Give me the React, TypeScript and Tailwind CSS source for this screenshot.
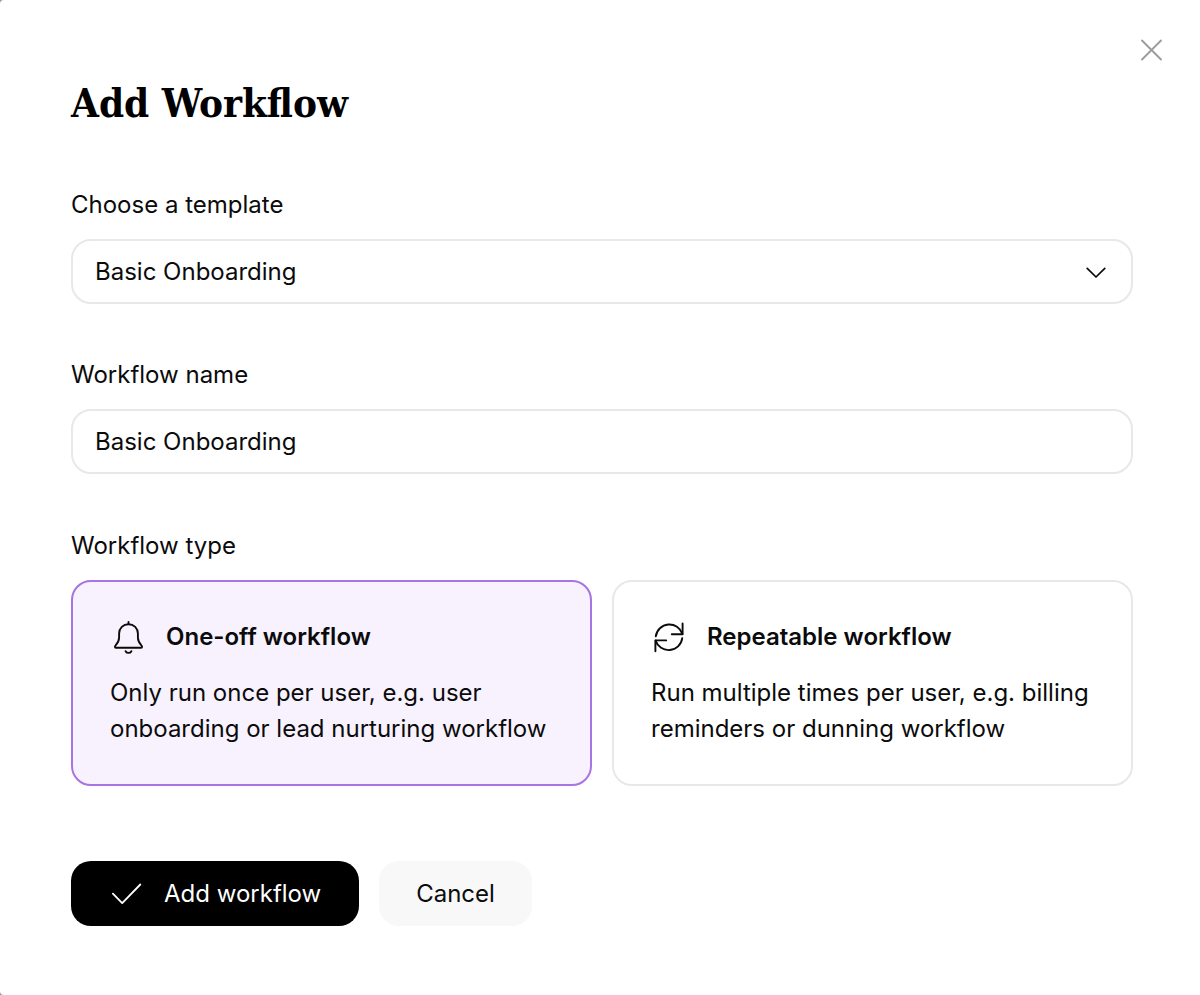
import { useState } from "react";
import type { ReactNode } from "react";

function CloseIcon() {
  return (
    <svg viewBox="0 0 24 24" className="size-6" fill="none" stroke="currentColor" strokeWidth="1.9" strokeLinecap="round" aria-hidden="true">
      <path d="M3 2.500l19 19M22 2.500l-19 19" />
    </svg>
  );
}

function ChevronIcon() {
  return (
    <svg viewBox="0 0 20 12" className="pointer-events-none absolute right-[27px] h-3 w-5" fill="none" stroke="currentColor" strokeWidth="1.7" strokeLinecap="round" strokeLinejoin="round" aria-hidden="true">
      <path d="M1.200 2.300L10 11l8.800-8.700" />
    </svg>
  );
}

function BellIcon() {
  return (
    <svg viewBox="0 0 36 36" className="size-9 shrink-0" fill="none" stroke="currentColor" strokeWidth="1.9" strokeLinecap="round" strokeLinejoin="round" aria-hidden="true">
      <path d="M18.500 3v2" />
      <path d="M18.500 5.200c5.300 0 9.400 4.200 9.400 9.300v4c0 4 1.400 5.600 3.500 7.800 1.100 1.100.8 2.400-.6 2.400H6.200c-1.400 0-1.700-1.300-.6-2.400 2.100-2.200 3.500-3.800 3.500-7.800v-4c0-5.100 4.100-9.300 9.400-9.300z" />
      <path d="M15.600 32.200c.6 1.100 1.700 1.700 2.900 1.700s2.300-.6 2.900-1.700" />
    </svg>
  );
}

function RefreshIcon() {
  return (
    <svg viewBox="0 0 36 36" className="size-9 shrink-0" fill="none" stroke="currentColor" strokeWidth="1.9" strokeLinecap="round" strokeLinejoin="round" aria-hidden="true">
      <path d="M31.600 4.400v10.800H20.800" />
      <path d="M4.800 17.300A13.700 13.700 0 0 1 31.400 15" />
      <path d="M4.400 32.200V21.400H15.200" />
      <path d="M31.200 19.300A13.700 13.700 0 0 1 4.600 21.600" />
    </svg>
  );
}

function CheckIcon() {
  return (
    <svg viewBox="0 0 36 36" className="size-9 shrink-0" fill="none" stroke="currentColor" strokeWidth="1.800" strokeLinecap="round" strokeLinejoin="round" aria-hidden="true">
      <path d="M3.900 17.700l9.300 9.400L31.300 8.500" />
    </svg>
  );
}

type TypeCardProps = {
  value: string;
  title: string;
  description: string;
  icon: ReactNode;
  selected: boolean;
  onSelect: (value: string) => void;
};

function TypeCard({ value, title, description, icon, selected, onSelect }: TypeCardProps) {
  return (
    <label
      className={
        selected
          ? "relative flex cursor-pointer flex-col gap-5 rounded-[20px] border-2 border-[#a873e3] bg-[#f8f2fe] p-[37px]"
          : "relative flex cursor-pointer flex-col gap-5 rounded-[20px] border-2 border-[#e8e8ea] bg-white p-[37px]"
      }
    >
      <input
        type="radio"
        name="workflow-type"
        value={value}
        checked={selected}
        onChange={() => onSelect(value)}
        className="sr-only"
      />
      <span className="flex items-center gap-5 font-semibold">
        {icon}
        {title}
      </span>
      <span>{description}</span>
    </label>
  );
}

export default function App() {
  const [template, setTemplate] = useState("Basic Onboarding");
  const [name, setName] = useState("Basic Onboarding");
  const [type, setType] = useState("one-off");

  return (
    <div className="min-h-screen bg-[#9a9a9a]">
      <main
        role="dialog"
        aria-labelledby="dialog-title"
        className="min-h-screen rounded-l-[4px] bg-white font-['Inter',sans-serif] text-2xl leading-9 text-[#0b0b0c]"
      >
        <div className="flex justify-end pt-[38px] pr-[37px]">
          <button type="button" aria-label="Close" className="text-[#9c9c9e]">
            <CloseIcon />
          </button>
        </div>
        <form className="pr-[67px] pb-16 pl-[71px]" onSubmit={(e) => e.preventDefault()}>
          <h1
            id="dialog-title"
            className="pt-[13px] font-['DejaVu_Serif_Condensed','DejaVu_Serif',serif] text-[40px] leading-[56px] font-bold text-black"
          >
            Add Workflow
          </h1>

          <div className="mt-14 flex flex-col gap-4">
            <label htmlFor="template">Choose a template</label>
            <div className="relative flex items-center">
              <select
                id="template"
                value={template}
                onChange={(e) => setTemplate(e.target.value)}
                className="h-[65px] w-full appearance-none rounded-[20px] border-2 border-[#e8e8ea] bg-white px-[22px]"
              >
                <option>Basic Onboarding</option>
              </select>
              <ChevronIcon />
            </div>
          </div>

          <div className="mt-[53px] flex flex-col gap-4">
            <label htmlFor="workflow-name">Workflow name</label>
            <input
              id="workflow-name"
              type="text"
              value={name}
              onChange={(e) => setName(e.target.value)}
              className="h-[65px] w-full rounded-[20px] border-2 border-[#e8e8ea] bg-white px-[22px]"
            />
          </div>

          <fieldset className="mt-[54px]">
            <legend className="mb-4">Workflow type</legend>
            <div className="grid grid-cols-2 gap-5">
              <TypeCard
                value="one-off"
                title="One-off workflow"
                description="Only run once per user, e.g. user onboarding or lead nurturing workflow"
                icon={<BellIcon />}
                selected={type === "one-off"}
                onSelect={setType}
              />
              <TypeCard
                value="repeatable"
                title="Repeatable workflow"
                description="Run multiple times per user, e.g. billing reminders or dunning workflow"
                icon={<RefreshIcon />}
                selected={type === "repeatable"}
                onSelect={setType}
              />
            </div>
          </fieldset>

          <div className="mt-[75px] flex gap-5">
            <button type="submit" className="flex h-[65px] items-center gap-[19px] rounded-[20px] bg-black px-[38px] text-white">
              <CheckIcon />
              Add workflow
            </button>
            <button type="button" className="h-[65px] rounded-[20px] bg-[#f8f8f8] px-[37px]">
              Cancel
            </button>
          </div>
        </form>
      </main>
    </div>
  );
}
